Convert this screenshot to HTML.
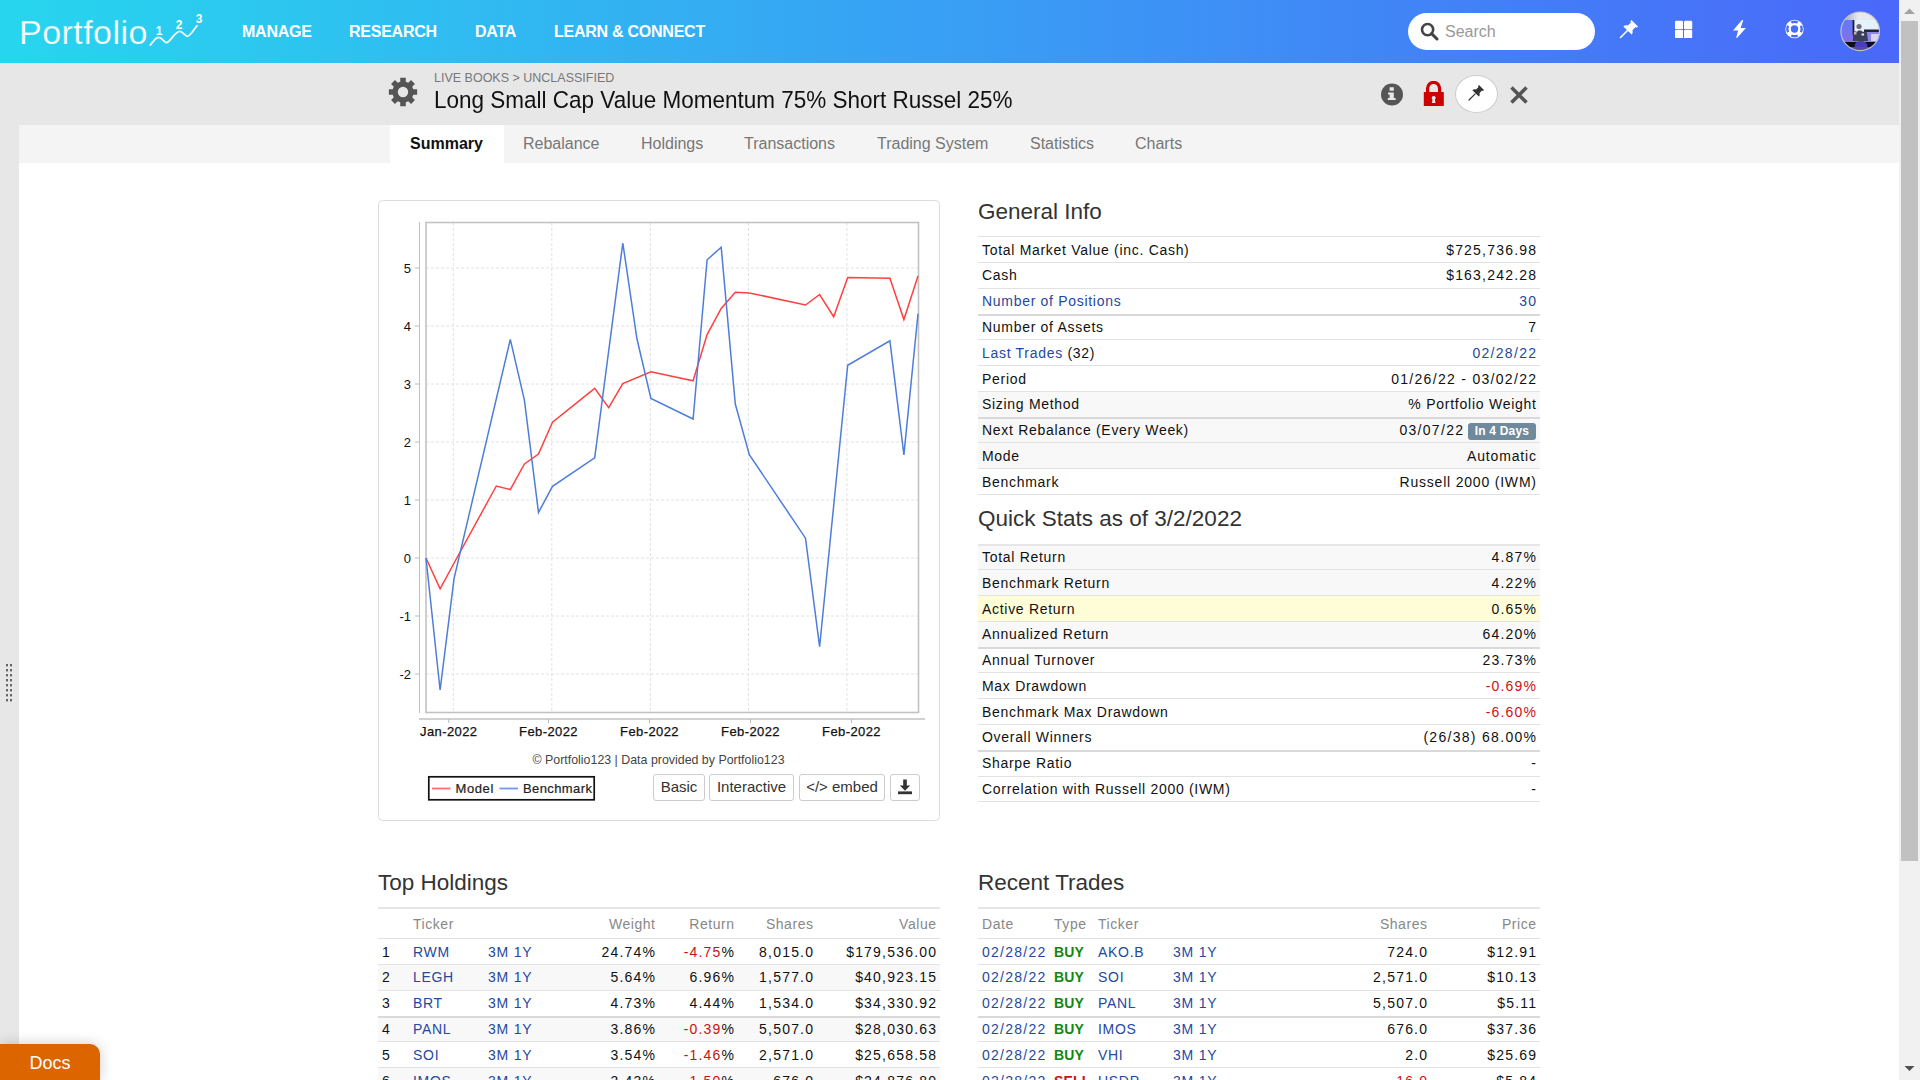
<!DOCTYPE html>
<html><head><meta charset="utf-8">
<style>
*{box-sizing:border-box}
html,body{margin:0;padding:0}
body{width:1920px;height:1080px;overflow:hidden;position:relative;background:#fff;font-family:"Liberation Sans",sans-serif;color:#222}
.abs{position:absolute}
#hdr{left:0;top:0;width:1899px;height:63px;background:linear-gradient(to right,#27d6ee,#4a68fa)}
#band{left:0;top:63px;width:1899px;height:62px;background:#e7e7e7}
#strip{left:0;top:125px;width:19px;height:955px;background:#e7e7e7}
#tabs{left:19px;top:125px;width:1880px;height:38px;background:#f4f4f4}
#sb{left:1899px;top:0;width:21px;height:1080px;background:#f1f1f1}
#thumb{left:1901px;top:21px;width:17px;height:840px;background:#c1c1c1}
.nav{top:23px;color:#fff;font-weight:700;font-size:16px;line-height:18px;white-space:nowrap;letter-spacing:-0.25px}
.tab{top:135px;font-size:16px;line-height:18px;color:#777;white-space:nowrap}
.btn{top:774px;height:27px;border:1px solid #ccc;border-radius:3px;background:#fff;font-size:15px;line-height:23px;text-align:center;color:#333}
.row{position:absolute;box-sizing:border-box}
.c{position:absolute;top:2.5px;font-size:14px;line-height:20px;color:#111;white-space:nowrap}
.hdrrow .c{top:5px}
.tk .c{top:1.5px}
.lnk{color:#2648a0}
.neg{color:#cc1111}
.hd{color:#888}
.buy{color:#118811;font-weight:700}
.sell{color:#cc1111;font-weight:700}
.badge{position:absolute;right:4px;top:4.3px;height:17px;width:68px;background:#6f8a9c;color:#fff;font-weight:700;font-size:12px;line-height:17px;text-align:center;border-radius:3px;letter-spacing:0.2px}
.h2{position:absolute;font-size:22.5px;line-height:26px;margin-top:1.5px;color:#333;white-space:nowrap}
</style></head><body>
<div id="hdr" class="abs"></div>
<div id="band" class="abs"></div>
<div id="strip" class="abs"></div>
<div id="tabs" class="abs"></div>
<div id="sb" class="abs"></div>
<div id="thumb" class="abs"></div>

<div class="abs nav" style="left:242px">MANAGE</div>
<div class="abs nav" style="left:349px">RESEARCH</div>
<div class="abs nav" style="left:475px">DATA</div>
<div class="abs nav" style="left:554px">LEARN &amp; CONNECT</div>

<div class="abs" style="left:390px;top:125px;width:114px;height:38px;background:#fff"></div>
<div class="abs tab" style="left:410px;color:#111;font-weight:700">Summary</div>
<div class="abs tab" style="left:523px">Rebalance</div>
<div class="abs tab" style="left:641px">Holdings</div>
<div class="abs tab" style="left:744px">Transactions</div>
<div class="abs tab" style="left:877px">Trading System</div>
<div class="abs tab" style="left:1030px">Statistics</div>
<div class="abs tab" style="left:1135px">Charts</div>


<!-- logo -->
<div class="abs" style="left:19px;top:13px;font-size:34px;line-height:38px;color:#fff;letter-spacing:0.45px;white-space:nowrap;-webkit-text-stroke:0.25px #29d2ee">Portfolio</div>
<svg class="abs" style="left:148px;top:10px" width="60" height="40" viewBox="0 0 60 40">
 <path d="M2.3 35.1 C6 30 8 27.3 10.9 27.3 C14 27.3 16 32.6 18.6 32.6 C22 32.6 27 21.4 31.6 21.4 C35 21.4 37 26.3 39.6 26.3 C42 26.3 46 19.5 49 15.7" fill="none" stroke="#fff" stroke-width="1.7" stroke-linecap="round"/>
 <g font-family="Liberation Sans" font-size="12" font-weight="700" fill="#fff" text-anchor="middle">
 <text x="11" y="24.7">1</text><text x="31.2" y="18.6">2</text><text x="51.2" y="13.3">3</text></g>
</svg>
<!-- search -->
<div class="abs" style="left:1408px;top:13px;width:187px;height:37px;border-radius:19px;background:#fff"></div>
<svg class="abs" style="left:1420px;top:22px" width="19" height="19" viewBox="0 0 19 19">
 <circle cx="7.6" cy="7.6" r="5.6" fill="none" stroke="#444" stroke-width="2.6"/>
 <path d="M11.6 11.6 L17 17" stroke="#444" stroke-width="3" stroke-linecap="round"/>
</svg>
<div class="abs" style="left:1445px;top:23px;font-size:16px;line-height:18px;color:#999">Search</div>
<!-- pin -->
<svg class="abs" style="left:1619px;top:19px" width="20" height="20" viewBox="0 0 20 20">
 <path d="M12.5 1 L19 7.5 L17.8 8.7 L16.6 8 L13.4 11.2 C14 13 13.6 14.6 12.6 15.6 L4.4 7.4 C5.4 6.4 7 6 8.8 6.6 L12 3.4 L11.3 2.2 Z" fill="#fff"/>
 <path d="M8.5 11.5 L1.5 18.5" stroke="#fff" stroke-width="1.6" stroke-linecap="round"/>
</svg>
<!-- grid -->
<svg class="abs" style="left:1674px;top:20px" width="19" height="19" viewBox="0 0 19 19">
 <path fill="#fff" d="M1 2 Q1 0.8 2.2 0.8 H7.8 Q9 0.8 9 2 V9 H1 Z M10 2 Q10 0.8 11.2 0.8 H17 Q18.2 0.8 18.2 2 V9 H10 Z M1 11 Q1 9.8 2.2 9.8 H7.8 Q9 9.8 9 11 V18 H1 Z M10 11 Q10 9.8 11.2 9.8 H17 Q18.2 9.8 18.2 11 V18 H10 Z"/>
</svg>
<!-- bolt -->
<svg class="abs" style="left:1732px;top:19px" width="16" height="20" viewBox="0 0 16 20">
 <path d="M10 1 L11.3 1.2 L8.6 9.1 L13.9 9.1 L5 18.9 L4.2 18.7 L6.1 11.4 L1 11.4 Z" fill="#fff"/>
</svg>
<!-- lifebuoy -->
<svg class="abs" style="left:1784px;top:18px" width="22" height="22" viewBox="0 0 22 22">
 <defs><mask id="lb"><rect width="22" height="22" fill="#000"/><circle cx="10.5" cy="11" r="9.2" fill="#fff"/><circle cx="10.5" cy="11" r="3.7" fill="#000"/>
 <g stroke="#000" stroke-width="2.3" fill="none">
  <path d="M7.3 4.6 A7 7 0 0 1 13.7 4.6"/><path d="M7.3 17.4 A7 7 0 0 0 13.7 17.4"/>
  <path d="M4.1 7.8 A7 7 0 0 0 4.1 14.2"/><path d="M16.9 7.8 A7 7 0 0 1 16.9 14.2"/>
 </g></mask></defs>
 <rect width="22" height="22" fill="#fff" mask="url(#lb)"/>
</svg>
<!-- avatar -->
<svg class="abs" style="left:1840px;top:11px" width="41" height="41" viewBox="0 0 41 41">
 <defs><clipPath id="av"><circle cx="20.2" cy="20.3" r="19.3"/></clipPath>
 <filter id="bl" x="-10%" y="-10%" width="120%" height="120%"><feGaussianBlur stdDeviation="0.55"/></filter>
 <linearGradient id="avl" x1="0" y1="0" x2="0" y2="1"><stop offset="0" stop-color="#5f7cf2"/><stop offset="1" stop-color="#8a6ee8"/></linearGradient>
 <linearGradient id="avt" x1="0" y1="0" x2="1" y2="0"><stop offset="0" stop-color="#8a8fa8"/><stop offset="0.45" stop-color="#e8eaf0"/><stop offset="1" stop-color="#dfe6ee"/></linearGradient>
 </defs>
 <g clip-path="url(#av)"><g filter="url(#bl)">
  <rect x="-2" y="-2" width="45" height="45" fill="#7a7ae8"/>
  <rect x="-2" y="-2" width="45" height="11" fill="url(#avt)"/>
  <rect x="-2" y="9" width="15" height="24" fill="url(#avl)"/>
  <rect x="14" y="9" width="29" height="12" fill="#e4f2fb"/>
  <rect x="12.6" y="9" width="1.8" height="15" fill="#1a1a3a"/>
  <rect x="24" y="18.5" width="19" height="2.6" fill="#20203a"/>
  <rect x="24" y="21" width="19" height="12" fill="#8c86e6"/>
  <rect x="31" y="23" width="8" height="7" fill="#d8d4f2"/>
  <circle cx="19" cy="15.5" r="2.6" fill="#7a6a78"/>
  <path d="M13 22 Q15 19 17 21 L18 19.5 L21 19.5 L23 21 Q26 19 27 22 L28 30 L13 30 Z" fill="#3c3c5c"/>
  <rect x="21.5" y="22.5" width="2.6" height="2" fill="#eee"/>
  <rect x="14" y="21" width="2.5" height="2.5" fill="#c9b3b0"/>
  <path d="M-2 31 L43 31 L43 36 L-2 36 Z" fill="#0c0c1c"/>
  <ellipse cx="21" cy="35" rx="6.5" ry="5" fill="#4a3cb8"/>
  <rect x="-2" y="36" width="45" height="8" fill="#5848b0"/>
 </g></g>
 <circle cx="20.2" cy="20.3" r="19.3" fill="none" stroke="#c4c2c8" stroke-width="1.2"/>
</svg>
<!-- title area -->
<svg class="abs" style="left:388px;top:77px" width="30" height="30" viewBox="0 0 30 30">
 <path fill="#555" fill-rule="evenodd" d="M12.26 4.76 L12.25 0.86 L17.75 0.86 L17.74 4.76 A10.6 10.6 0 0 1 20.30 5.82 L23.05 3.06 L26.94 6.95 L24.18 9.70 A10.6 10.6 0 0 1 25.24 12.26 L29.14 12.25 L29.14 17.75 L25.24 17.74 A10.6 10.6 0 0 1 24.18 20.30 L26.94 23.05 L23.05 26.94 L20.30 24.18 A10.6 10.6 0 0 1 17.74 25.24 L17.75 29.14 L12.25 29.14 L12.26 25.24 A10.6 10.6 0 0 1 9.70 24.18 L6.95 26.94 L3.06 23.05 L5.82 20.30 A10.6 10.6 0 0 1 4.76 17.74 L0.86 17.75 L0.86 12.25 L4.76 12.26 A10.6 10.6 0 0 1 5.82 9.70 L3.06 6.95 L6.95 3.06 L9.70 5.82 A10.6 10.6 0 0 1 12.26 4.76 Z M15 9.8 A5.2 5.2 0 1 0 15 20.2 A5.2 5.2 0 1 0 15 9.8 Z"/>
</svg>
<div class="abs" style="left:434px;top:71px;font-size:12.5px;line-height:14px;color:#777;white-space:nowrap">LIVE BOOKS &gt; UNCLASSIFIED</div>
<div class="abs" style="left:434px;top:85.8px;font-size:22.5px;line-height:26px;color:#111;white-space:nowrap;transform:scaleY(1.1);transform-origin:0 0">Long Small Cap Value Momentum 75% Short Russel 25%</div>
<!-- info -->
<svg class="abs" style="left:1380px;top:83px" width="24" height="24" viewBox="0 0 24 24">
 <circle cx="12" cy="11.5" r="11" fill="#555"/>
 <path d="M9.6 4.3 h4.2 v3.4 h-4.2 Z M8 9.5 h5.8 v5.6 h1.8 v2 h-7.8 v-2 h1.8 v-3.6 h-1.6 Z" fill="#e7e7e7"/>
</svg>
<!-- lock -->
<svg class="abs" style="left:1423px;top:81px" width="22" height="26" viewBox="0 0 22 26">
 <path d="M4.6 11.5 V7.4 A6 6 0 0 1 16.6 7.4 V11.5" fill="none" stroke="#cc0000" stroke-width="3.3"/>
 <rect x="0.8" y="11" width="20" height="14" fill="#cc0000"/>
 <path d="M10.7 15 a2 2 0 0 1 1.2 3.6 l0.6 3.4 h-3.6 l0.6 -3.4 A2 2 0 0 1 10.7 15 Z" fill="#e7e7e7"/>
</svg>
<!-- pin circle -->
<div class="abs" style="left:1455px;top:75px;width:43px;height:38px;border-radius:50%;background:#fff;border:1px solid #ccc;height:38px"></div>
<svg class="abs" style="left:1468px;top:84px" width="17" height="17" viewBox="0 0 17 17">
 <path d="M11 1 L16 6 L15 7 L14 6.5 L11.5 9 C12 10.5 11.6 11.8 10.8 12.6 L4.4 6.2 C5.2 5.4 6.5 5 8 5.5 L10.5 3 L10 2 Z" fill="#333"/>
 <path d="M7.2 9.8 L1 16" stroke="#333" stroke-width="1.2" stroke-linecap="round"/>
</svg>
<!-- close -->
<svg class="abs" style="left:1509px;top:85px" width="20" height="20" viewBox="0 0 20 20">
 <path d="M2.5 2.5 L17.5 17.5 M17.5 2.5 L2.5 17.5" stroke="#555" stroke-width="3.6"/>
</svg>
<!-- chart -->
<svg class="abs" style="left:378px;top:200px" width="562" height="621" viewBox="378 200 562 621">
 <rect x="378.5" y="200.5" width="561" height="620" rx="4" fill="#fff" stroke="#dcdcdc"/>
 <g stroke="#e2e2e2" stroke-width="1" stroke-dasharray="3 2" fill="none"><line x1="426" y1="674" x2="918" y2="674"/><line x1="426" y1="616" x2="918" y2="616"/><line x1="426" y1="558" x2="918" y2="558"/><line x1="426" y1="500" x2="918" y2="500"/><line x1="426" y1="442" x2="918" y2="442"/><line x1="426" y1="384" x2="918" y2="384"/><line x1="426" y1="326" x2="918" y2="326"/><line x1="426" y1="268" x2="918" y2="268"/><line x1="453.3" y1="223" x2="453.3" y2="712"/><line x1="551.8" y1="223" x2="551.8" y2="712"/><line x1="650.4" y1="223" x2="650.4" y2="712"/><line x1="748.4" y1="223" x2="748.4" y2="712"/><line x1="846.9" y1="223" x2="846.9" y2="712"/></g>
 <rect x="426" y="222.5" width="492.5" height="490" fill="none" stroke="#c2c2c2" stroke-width="1.6"/>
 <line x1="419.5" y1="222" x2="419.5" y2="713" stroke="#c2c2c2" stroke-width="1"/>
 <line x1="419" y1="719" x2="925" y2="719" stroke="#c2c2c2" stroke-width="1.4"/>
 <g stroke="#bbb" stroke-width="1"><line x1="415" y1="674" x2="419" y2="674"/><line x1="415" y1="616" x2="419" y2="616"/><line x1="415" y1="558" x2="419" y2="558"/><line x1="415" y1="500" x2="419" y2="500"/><line x1="415" y1="442" x2="419" y2="442"/><line x1="415" y1="384" x2="419" y2="384"/><line x1="415" y1="326" x2="419" y2="326"/><line x1="415" y1="268" x2="419" y2="268"/><line x1="448.75" y1="719" x2="448.75" y2="723"/><line x1="548.5" y1="719" x2="548.5" y2="723"/><line x1="649.5" y1="719" x2="649.5" y2="723"/><line x1="750.5" y1="719" x2="750.5" y2="723"/><line x1="851.5" y1="719" x2="851.5" y2="723"/></g>
 <g font-family="Liberation Sans" font-size="13" fill="#111"><text x="411" y="679" text-anchor="end">-2</text><text x="411" y="621" text-anchor="end">-1</text><text x="411" y="563" text-anchor="end">0</text><text x="411" y="505" text-anchor="end">1</text><text x="411" y="447" text-anchor="end">2</text><text x="411" y="389" text-anchor="end">3</text><text x="411" y="331" text-anchor="end">4</text><text x="411" y="273" text-anchor="end">5</text></g>
 <g font-family="Liberation Sans" font-size="13" font-weight="400" fill="#111" stroke="#111" stroke-width="0.25" letter-spacing="0.4" transform="translate(0,-1)"><text x="448.75" y="737" text-anchor="middle">Jan-2022</text><text x="548.5" y="737" text-anchor="middle">Feb-2022</text><text x="649.5" y="737" text-anchor="middle">Feb-2022</text><text x="750.5" y="737" text-anchor="middle">Feb-2022</text><text x="851.5" y="737" text-anchor="middle">Feb-2022</text></g>
 <polyline points="426.0,558.0 440.1,588.9 454.1,563.0 496.3,486.0 510.3,489.6 524.4,463.9 538.5,454.1 552.5,422.2 594.7,388.3 608.7,407.6 622.8,383.5 650.9,371.7 693.1,380.8 707.1,334.6 721.2,308.4 735.3,292.2 749.3,292.9 805.5,305.0 819.6,294.5 833.7,316.7 847.7,277.4 889.9,278.3 903.9,319.5 918.0,276.0" fill="none" stroke="#ff4040" stroke-width="1.5" stroke-linejoin="miter"/>
 <polyline points="426.0,558.0 440.1,690.0 454.1,578.3 510.3,339.4 524.4,400.2 538.5,512.5 552.5,486.3 594.7,457.8 622.8,243.0 636.9,338.5 650.9,398.4 693.1,419.0 707.1,259.8 721.2,247.3 735.3,404.0 749.3,454.6 805.5,538.2 819.6,646.7 847.7,365.3 889.9,340.8 903.9,454.9 918.0,313.7" fill="none" stroke="#4f7dda" stroke-width="1.5" stroke-linejoin="miter"/>
 <text x="658.5" y="764" text-anchor="middle" font-family="Liberation Sans" font-size="12.4" fill="#444">© Portfolio123 | Data provided by Portfolio123</text>
 <rect x="428.8" y="776.8" width="165.4" height="23" fill="#fff" stroke="#111" stroke-width="1.7"/>
 <line x1="432" y1="788.5" x2="450.5" y2="788.5" stroke="#ff6e6e" stroke-width="1.8"/>
 <line x1="499.5" y1="788.5" x2="518" y2="788.5" stroke="#7098e6" stroke-width="1.8"/>
 <text x="455.5" y="793" font-family="Liberation Sans" font-size="13" font-weight="400" fill="#222" stroke="#222" stroke-width="0.2" letter-spacing="0.6">Model</text>
 <text x="523" y="793" font-family="Liberation Sans" font-size="13" font-weight="400" fill="#222" stroke="#222" stroke-width="0.2" letter-spacing="0.4">Benchmark</text>
</svg>
<div class="abs btn" style="left:653px;width:52px">Basic</div>
<div class="abs btn" style="left:709px;width:85px">Interactive</div>
<div class="abs btn" style="left:799px;width:86px">&lt;/&gt; embed</div>
<div class="abs btn" style="left:890px;width:30px"></div>
<svg class="abs" style="left:897px;top:779px" width="16" height="16" viewBox="0 0 16 16"><path d="M6.2 0.5 h3.6 v6 h3.4 L8 11.8 L2.8 6.5 h3.4 Z" fill="#333"/><rect x="1" y="12.4" width="14" height="2.8" fill="#333"/></svg>
<!-- tables -->
<div class="row" style="left:978px;top:236.20px;width:562px;height:26.78px;background:#fff;border-top:1px solid #e2e2e2"><span class="c " style="left:4px;letter-spacing:0.7px">Total Market Value (inc. Cash)</span><span class="c " style="right:2.80px;letter-spacing:1.2px">$725,736.98</span></div>
<div class="row" style="left:978px;top:261.98px;width:562px;height:26.78px;background:#fff;border-top:1px solid #e2e2e2"><span class="c " style="left:4px;letter-spacing:0.7px">Cash</span><span class="c " style="right:2.80px;letter-spacing:1.2px">$163,242.28</span></div>
<div class="row" style="left:978px;top:287.76px;width:562px;height:26.78px;background:#fff;border-top:1px solid #e2e2e2"><span class="c lnk" style="left:4px;letter-spacing:0.7px">Number of Positions</span><span class="c lnk" style="right:2.80px;letter-spacing:1.2px">30</span></div>
<div class="row tk" style="left:978px;top:313.54px;width:562px;height:26.78px;background:#fff;border-top:2px solid #d9d9d9"><span class="c " style="left:4px;letter-spacing:0.7px">Number of Assets</span><span class="c " style="right:2.80px;letter-spacing:1.2px">7</span></div>
<div class="row" style="left:978px;top:339.32px;width:562px;height:26.78px;background:#fff;border-top:1px solid #e2e2e2"><span class="c " style="left:4px;letter-spacing:0.7px"><span class="lnk">Last Trades</span> (32)</span><span class="c lnk" style="right:2.70px;letter-spacing:1.3px">02/28/22</span></div>
<div class="row" style="left:978px;top:365.10px;width:562px;height:26.78px;background:#fff;border-top:1px solid #e2e2e2"><span class="c " style="left:4px;letter-spacing:0.7px">Period</span><span class="c " style="right:2.70px;letter-spacing:1.3px">01/26/22 - 03/02/22</span></div>
<div class="row" style="left:978px;top:390.88px;width:562px;height:26.78px;background:#f8f8f8;border-top:1px solid #e2e2e2"><span class="c " style="left:4px;letter-spacing:0.7px">Sizing Method</span><span class="c " style="right:3.25px;letter-spacing:0.75px">% Portfolio Weight</span></div>
<div class="row tk" style="left:978px;top:416.66px;width:562px;height:26.78px;background:#f8f8f8;border-top:2px solid #d9d9d9"><span class="c " style="left:4px;letter-spacing:0.7px">Next Rebalance (Every Week)</span><span class="c " style="right:75.70px;letter-spacing:1.3px">03/07/22</span><span class="badge">In 4 Days</span></div>
<div class="row" style="left:978px;top:442.44px;width:562px;height:26.78px;background:#f8f8f8;border-top:1px solid #e2e2e2"><span class="c " style="left:4px;letter-spacing:0.7px">Mode</span><span class="c " style="right:3.15px;letter-spacing:0.85px">Automatic</span></div>
<div class="row" style="left:978px;top:468.22px;width:562px;height:26.78px;background:#fff;border-top:1px solid #e2e2e2"><span class="c " style="left:4px;letter-spacing:0.7px">Benchmark</span><span class="c " style="right:3.20px;letter-spacing:0.8px">Russell 2000 (IWM)</span></div>
<div class="abs" style="left:978px;top:494.00px;width:562px;height:1px;background:#e2e2e2"></div>
<div class="row tk" style="left:978px;top:543.50px;width:562px;height:26.78px;background:#f8f8f8;border-top:2px solid #e6e6e6"><span class="c " style="left:4px;letter-spacing:0.7px">Total Return</span><span class="c " style="right:2.80px;letter-spacing:1.2px">4.87%</span></div>
<div class="row" style="left:978px;top:569.28px;width:562px;height:26.78px;background:#f8f8f8;border-top:1px solid #e2e2e2"><span class="c " style="left:4px;letter-spacing:0.7px">Benchmark Return</span><span class="c " style="right:2.80px;letter-spacing:1.2px">4.22%</span></div>
<div class="row" style="left:978px;top:595.06px;width:562px;height:26.78px;background:#fefdd8;border-top:1px solid #e2e2e2"><span class="c " style="left:4px;letter-spacing:0.7px">Active Return</span><span class="c " style="right:2.80px;letter-spacing:1.2px">0.65%</span></div>
<div class="row" style="left:978px;top:620.84px;width:562px;height:26.78px;background:#f8f8f8;border-top:1px solid #e2e2e2"><span class="c " style="left:4px;letter-spacing:0.7px">Annualized Return</span><span class="c " style="right:2.80px;letter-spacing:1.2px">64.20%</span></div>
<div class="row tk" style="left:978px;top:646.62px;width:562px;height:26.78px;background:#fff;border-top:2px solid #d9d9d9"><span class="c " style="left:4px;letter-spacing:0.7px">Annual Turnover</span><span class="c " style="right:2.80px;letter-spacing:1.2px">23.73%</span></div>
<div class="row" style="left:978px;top:672.40px;width:562px;height:26.78px;background:#fff;border-top:1px solid #e2e2e2"><span class="c " style="left:4px;letter-spacing:0.7px">Max Drawdown</span><span class="c neg" style="right:2.80px;letter-spacing:1.2px">-0.69%</span></div>
<div class="row" style="left:978px;top:698.18px;width:562px;height:26.78px;background:#fff;border-top:1px solid #e2e2e2"><span class="c " style="left:4px;letter-spacing:0.7px">Benchmark Max Drawdown</span><span class="c neg" style="right:2.80px;letter-spacing:1.2px">-6.60%</span></div>
<div class="row" style="left:978px;top:723.96px;width:562px;height:26.78px;background:#fff;border-top:1px solid #e2e2e2"><span class="c " style="left:4px;letter-spacing:0.7px">Overall Winners</span><span class="c " style="right:2.70px;letter-spacing:1.3px">(26/38) 68.00%</span></div>
<div class="row tk" style="left:978px;top:749.74px;width:562px;height:26.78px;background:#fff;border-top:2px solid #d9d9d9"><span class="c " style="left:4px;letter-spacing:0.7px">Sharpe Ratio</span><span class="c " style="right:2.80px;letter-spacing:1.2px">-</span></div>
<div class="row" style="left:978px;top:775.52px;width:562px;height:26.78px;background:#fff;border-top:1px solid #e2e2e2"><span class="c " style="left:4px;letter-spacing:0.7px">Correlation with Russell 2000 (IWM)</span><span class="c " style="right:2.80px;letter-spacing:1.2px">-</span></div>
<div class="abs" style="left:978px;top:801.30px;width:562px;height:1px;background:#e2e2e2"></div>
<div class="h2" style="left:978px;top:197px">General Info</div>
<div class="h2" style="left:978px;top:504px">Quick Stats as of 3/2/2022</div>
<div class="h2" style="left:378px;top:868px">Top Holdings</div>
<div class="h2" style="left:978px;top:868px">Recent Trades</div>
<div class="row hdrrow" style="left:378px;top:907px;width:562px;height:31px;border-top:2px solid #e6e6e6"><span class="c hd" style="left:35px;letter-spacing:0.55px">Ticker</span><span class="c hd" style="right:284.45px;letter-spacing:0.55px">Weight</span><span class="c hd" style="right:205.45px;letter-spacing:0.55px">Return</span><span class="c hd" style="right:126.45px;letter-spacing:0.55px">Shares</span><span class="c hd" style="right:3.45px;letter-spacing:0.55px">Value</span></div>
<div class="row" style="left:378px;top:938.00px;width:562px;height:26.85px;background:#fff;border-top:1px solid #e2e2e2"><span class="c " style="left:4px;letter-spacing:1.2px">1</span><span class="c lnk" style="left:35px;letter-spacing:0.7px">RWM</span><span class="c lnk" style="left:110px;letter-spacing:0.8px">3M 1Y</span><span class="c " style="right:283.80px;letter-spacing:1.2px">24.74%</span><span class="c " style="right:204.80px;letter-spacing:1.2px"><span class="neg">-4.75</span>%</span><span class="c " style="right:125.80px;letter-spacing:1.2px">8,015.0</span><span class="c " style="right:2.80px;letter-spacing:1.2px">$179,536.00</span></div>
<div class="row" style="left:378px;top:963.85px;width:562px;height:26.85px;background:#f8f8f8;border-top:1px solid #e2e2e2"><span class="c " style="left:4px;letter-spacing:1.2px">2</span><span class="c lnk" style="left:35px;letter-spacing:0.7px">LEGH</span><span class="c lnk" style="left:110px;letter-spacing:0.8px">3M 1Y</span><span class="c " style="right:283.80px;letter-spacing:1.2px">5.64%</span><span class="c " style="right:204.80px;letter-spacing:1.2px">6.96%</span><span class="c " style="right:125.80px;letter-spacing:1.2px">1,577.0</span><span class="c " style="right:2.80px;letter-spacing:1.2px">$40,923.15</span></div>
<div class="row" style="left:378px;top:989.70px;width:562px;height:26.85px;background:#fff;border-top:1px solid #e2e2e2"><span class="c " style="left:4px;letter-spacing:1.2px">3</span><span class="c lnk" style="left:35px;letter-spacing:0.7px">BRT</span><span class="c lnk" style="left:110px;letter-spacing:0.8px">3M 1Y</span><span class="c " style="right:283.80px;letter-spacing:1.2px">4.73%</span><span class="c " style="right:204.80px;letter-spacing:1.2px">4.44%</span><span class="c " style="right:125.80px;letter-spacing:1.2px">1,534.0</span><span class="c " style="right:2.80px;letter-spacing:1.2px">$34,330.92</span></div>
<div class="row tk" style="left:378px;top:1015.55px;width:562px;height:26.85px;background:#f8f8f8;border-top:2px solid #d9d9d9"><span class="c " style="left:4px;letter-spacing:1.2px">4</span><span class="c lnk" style="left:35px;letter-spacing:0.7px">PANL</span><span class="c lnk" style="left:110px;letter-spacing:0.8px">3M 1Y</span><span class="c " style="right:283.80px;letter-spacing:1.2px">3.86%</span><span class="c " style="right:204.80px;letter-spacing:1.2px"><span class="neg">-0.39</span>%</span><span class="c " style="right:125.80px;letter-spacing:1.2px">5,507.0</span><span class="c " style="right:2.80px;letter-spacing:1.2px">$28,030.63</span></div>
<div class="row" style="left:378px;top:1041.40px;width:562px;height:26.85px;background:#fff;border-top:1px solid #e2e2e2"><span class="c " style="left:4px;letter-spacing:1.2px">5</span><span class="c lnk" style="left:35px;letter-spacing:0.7px">SOI</span><span class="c lnk" style="left:110px;letter-spacing:0.8px">3M 1Y</span><span class="c " style="right:283.80px;letter-spacing:1.2px">3.54%</span><span class="c " style="right:204.80px;letter-spacing:1.2px"><span class="neg">-1.46</span>%</span><span class="c " style="right:125.80px;letter-spacing:1.2px">2,571.0</span><span class="c " style="right:2.80px;letter-spacing:1.2px">$25,658.58</span></div>
<div class="row" style="left:378px;top:1067.25px;width:562px;height:26.85px;background:#f8f8f8;border-top:1px solid #e2e2e2"><span class="c " style="left:4px;letter-spacing:1.2px">6</span><span class="c lnk" style="left:35px;letter-spacing:0.7px">IMOS</span><span class="c lnk" style="left:110px;letter-spacing:0.8px">3M 1Y</span><span class="c " style="right:283.80px;letter-spacing:1.2px">3.43%</span><span class="c " style="right:204.80px;letter-spacing:1.2px"><span class="neg">-1.50</span>%</span><span class="c " style="right:125.80px;letter-spacing:1.2px">676.0</span><span class="c " style="right:2.80px;letter-spacing:1.2px">$24,876.80</span></div>
<div class="row hdrrow" style="left:978px;top:907px;width:562px;height:31px;border-top:2px solid #e6e6e6"><span class="c hd" style="left:4px;letter-spacing:0.55px">Date</span><span class="c hd" style="left:76px;letter-spacing:0.55px">Type</span><span class="c hd" style="left:120px;letter-spacing:0.55px">Ticker</span><span class="c hd" style="right:112.45px;letter-spacing:0.55px">Shares</span><span class="c hd" style="right:3.45px;letter-spacing:0.55px">Price</span></div>
<div class="row" style="left:978px;top:938.00px;width:562px;height:26.85px;background:#fff;border-top:1px solid #e2e2e2"><span class="c lnk" style="left:4px;letter-spacing:1.25px">02/28/22</span><span class="c buy" style="left:76px;letter-spacing:0.2px">BUY</span><span class="c lnk" style="left:120px;letter-spacing:0.7px">AKO.B</span><span class="c lnk" style="left:195px;letter-spacing:0.8px">3M 1Y</span><span class="c " style="right:111.80px;letter-spacing:1.2px">724.0</span><span class="c " style="right:2.80px;letter-spacing:1.2px">$12.91</span></div>
<div class="row" style="left:978px;top:963.85px;width:562px;height:26.85px;background:#fff;border-top:1px solid #e2e2e2"><span class="c lnk" style="left:4px;letter-spacing:1.25px">02/28/22</span><span class="c buy" style="left:76px;letter-spacing:0.2px">BUY</span><span class="c lnk" style="left:120px;letter-spacing:0.7px">SOI</span><span class="c lnk" style="left:195px;letter-spacing:0.8px">3M 1Y</span><span class="c " style="right:111.80px;letter-spacing:1.2px">2,571.0</span><span class="c " style="right:2.80px;letter-spacing:1.2px">$10.13</span></div>
<div class="row" style="left:978px;top:989.70px;width:562px;height:26.85px;background:#fff;border-top:1px solid #e2e2e2"><span class="c lnk" style="left:4px;letter-spacing:1.25px">02/28/22</span><span class="c buy" style="left:76px;letter-spacing:0.2px">BUY</span><span class="c lnk" style="left:120px;letter-spacing:0.7px">PANL</span><span class="c lnk" style="left:195px;letter-spacing:0.8px">3M 1Y</span><span class="c " style="right:111.80px;letter-spacing:1.2px">5,507.0</span><span class="c " style="right:2.80px;letter-spacing:1.2px">$5.11</span></div>
<div class="row tk" style="left:978px;top:1015.55px;width:562px;height:26.85px;background:#fff;border-top:2px solid #d9d9d9"><span class="c lnk" style="left:4px;letter-spacing:1.25px">02/28/22</span><span class="c buy" style="left:76px;letter-spacing:0.2px">BUY</span><span class="c lnk" style="left:120px;letter-spacing:0.7px">IMOS</span><span class="c lnk" style="left:195px;letter-spacing:0.8px">3M 1Y</span><span class="c " style="right:111.80px;letter-spacing:1.2px">676.0</span><span class="c " style="right:2.80px;letter-spacing:1.2px">$37.36</span></div>
<div class="row" style="left:978px;top:1041.40px;width:562px;height:26.85px;background:#fff;border-top:1px solid #e2e2e2"><span class="c lnk" style="left:4px;letter-spacing:1.25px">02/28/22</span><span class="c buy" style="left:76px;letter-spacing:0.2px">BUY</span><span class="c lnk" style="left:120px;letter-spacing:0.7px">VHI</span><span class="c lnk" style="left:195px;letter-spacing:0.8px">3M 1Y</span><span class="c " style="right:111.80px;letter-spacing:1.2px">2.0</span><span class="c " style="right:2.80px;letter-spacing:1.2px">$25.69</span></div>
<div class="row" style="left:978px;top:1067.25px;width:562px;height:26.85px;background:#fff;border-top:1px solid #e2e2e2"><span class="c lnk" style="left:4px;letter-spacing:1.25px">02/28/22</span><span class="c sell" style="left:76px;letter-spacing:0.2px">SELL</span><span class="c lnk" style="left:120px;letter-spacing:0.7px">USDP</span><span class="c lnk" style="left:195px;letter-spacing:0.8px">3M 1Y</span><span class="c neg" style="right:111.80px;letter-spacing:1.2px">16.0</span><span class="c " style="right:2.80px;letter-spacing:1.2px">$5.84</span></div>
<!-- scrollbar arrows -->
<svg class="abs" style="left:1899px;top:0" width="21" height="21" viewBox="0 0 21 21"><path d="M5 14 L10.5 8.5 L16 14 Z" fill="#a3a3a3"/></svg>
<svg class="abs" style="left:1899px;top:1059px" width="21" height="21" viewBox="0 0 21 21"><path d="M5.5 7 L10.5 12 L15.5 7 Z" fill="#505050"/></svg>
<!-- left drag handle -->
<svg class="abs" style="left:5px;top:663px" width="8" height="40" viewBox="0 0 8 40">
 <g fill="#666">
 <rect x="1" y="1" width="2" height="2.4"/><rect x="5" y="1" width="2" height="2.4"/>
 <rect x="1" y="6" width="2" height="2.4"/><rect x="5" y="6" width="2" height="2.4"/>
 <rect x="1" y="11" width="2" height="2.4"/><rect x="5" y="11" width="2" height="2.4"/>
 <rect x="1" y="16" width="2" height="2.4"/><rect x="5" y="16" width="2" height="2.4"/>
 <rect x="1" y="21" width="2" height="2.4"/><rect x="5" y="21" width="2" height="2.4"/>
 <rect x="1" y="26" width="2" height="2.4"/><rect x="5" y="26" width="2" height="2.4"/>
 <rect x="1" y="31" width="2" height="2.4"/><rect x="5" y="31" width="2" height="2.4"/>
 <rect x="1" y="36" width="2" height="2.4"/><rect x="5" y="36" width="2" height="2.4"/>
 </g>
</svg>
<!-- docs -->
<div class="abs" style="left:0;top:1044px;width:100px;height:36px;background:#dd6500;border-top-right-radius:10px;box-shadow:0 0 10px rgba(0,0,0,0.18);color:#fff;font-size:18px;line-height:38px;text-align:center;box-shadow:0 0 14px rgba(0,0,0,0.2)">Docs</div>

</body></html>
